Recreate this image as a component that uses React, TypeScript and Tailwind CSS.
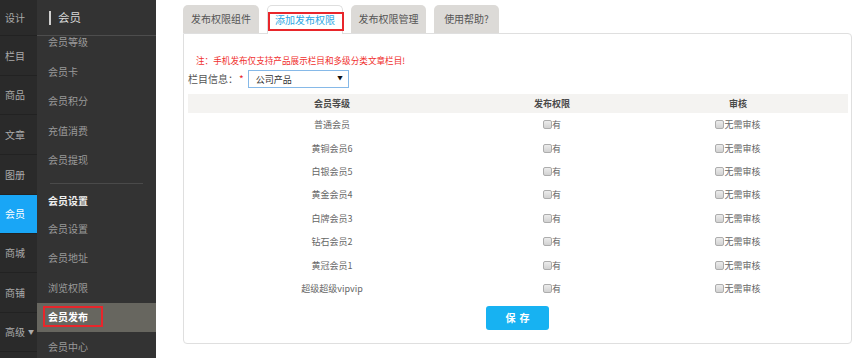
import React from "react";

const navItems: { label: string; cls: string; active?: boolean; caret?: boolean }[] = [
  { label: "设计", cls: "h-[36px]" },
  { label: "栏目", cls: "h-[40px]" },
  { label: "商品", cls: "h-[39px]" },
  { label: "文章", cls: "h-[40px]" },
  { label: "图册", cls: "h-[40px]" },
  { label: "会员", cls: "h-[39px]", active: true },
  { label: "商城", cls: "h-[39px]" },
  { label: "商铺", cls: "h-[40px]" },
  { label: "高级", cls: "h-[39px]", caret: true },
];

const levels = [
  "普通会员",
  "黄铜会员6",
  "白银会员5",
  "黄金会员4",
  "白牌会员3",
  "钻石会员2",
  "黄冠会员1",
  "超级超级vipvip",
];

function Box() {
  return (
    <span className="inline-block w-[9px] h-[9px] rounded-[2px] border border-[#adadad] bg-gradient-to-b from-[#ececec] to-[#d2d2d2]" />
  );
}

export default function App() {
  return (
    <div className="w-[860px] h-[358px] overflow-hidden flex bg-white font-['Noto_Sans_CJK_SC','Noto_Sans',sans-serif]">
      {/* column 1 */}
      <div className="w-[37px] shrink-0 bg-[#2a2a2a] flex flex-col">
        {navItems.map((n) => (
          <div
            key={n.label}
            className={`${n.cls} shrink-0 flex items-center pl-[5px] text-[10px] leading-none border-b border-[#222222] ${
              n.active ? "bg-[#19a6f6] text-white border-[#19a6f6]" : "text-[#ababab]"
            }`}
          >
            <span>{n.label}</span>
            {n.caret && <span className="ml-[3px] text-[6px] text-[#ababab]">▼</span>}
          </div>
        ))}
      </div>

      {/* column 2 */}
      <div className="w-[119px] shrink-0 bg-[#333333] flex flex-col">
        <div className="h-[36px] shrink-0 border-b border-[#4d4d4d] flex items-center">
          <span className="ml-[12px] w-[2px] h-[14px] bg-[#d0d0d0]" />
          <span className="ml-[7px] text-[11.5px] leading-none text-[#d8d8d8]">会员</span>
        </div>
        <div className="flex-1 overflow-hidden">
          <div className="mt-[-8.75px] flex flex-col">
            {["会员等级", "会员卡", "会员积分", "充值消费", "会员提现"].map((t) => (
              <div key={t} className="h-[29.5px] shrink-0 flex items-center pl-[11px] text-[10px] leading-none text-[#9a9a9a]">
                {t}
              </div>
            ))}
            <div className="mt-[8.25px] mx-[13px] h-[1px] bg-[#4a4a4a]" />
            <div className="mt-[4px] h-[26px] flex items-center pl-[11px] text-[10px] leading-none font-bold text-[#eeeeee]">
              会员设置
            </div>
            {["会员设置", "会员地址", "浏览权限"].map((t) => (
              <div key={t} className="h-[29.5px] shrink-0 flex items-center pl-[11px] text-[10px] leading-none text-[#9a9a9a]">
                {t}
              </div>
            ))}
            <div className="relative h-[29.5px] shrink-0 flex items-center pl-[11px] text-[10px] leading-none font-bold text-white bg-[#67665f]">
              会员发布
              <span className="absolute left-[6px] top-[3.5px] w-[60px] h-[21px] border-2 border-[#e8262b]" />
            </div>
            <div className="h-[29.5px] shrink-0 flex items-center pl-[11px] text-[10px] leading-none text-[#9a9a9a]">
              会员中心
            </div>
          </div>
        </div>
      </div>

      {/* main */}
      <div className="flex-1 flex flex-col pl-[27px] pr-[8px] pt-[5px]">
        <div className="flex items-end h-[28px] gap-[8px]">
          <div className="w-[76px] h-[28px] rounded-t-[5px] bg-[#dcdad7] flex items-center justify-center text-[10px] leading-none text-[#555555]">
            发布权限组件
          </div>
          <div className="relative w-[76px] h-[29px] mb-[-1px] rounded-t-[5px] bg-white border border-b-0 border-[#dedede] flex items-center justify-center text-[10px] leading-none text-[#2ba6e4] z-10">
            添加发布权限
            <span className="absolute left-[0px] top-[6px] w-[76px] h-[19px] border-2 border-[#e8262b]" />
          </div>
          <div className="w-[75px] h-[28px] rounded-t-[5px] bg-[#dcdad7] flex items-center justify-center text-[10px] leading-none text-[#555555]">
            发布权限管理
          </div>
          <div className="w-[65px] h-[28px] rounded-t-[5px] bg-[#dcdad7] flex items-center justify-center text-[10px] leading-none text-[#555555]">
            使用帮助?
          </div>
        </div>

        <div className="w-[669px] h-[311px] border border-[#dfdfdf] rounded-b-[4px] rounded-tr-[4px] px-[4px] flex flex-col">
          <div className="mt-[20px] ml-[8px] h-[12px] flex items-center text-[8.6px] leading-none text-[#f0302e]">
            注：手机发布仅支持产品展示栏目和多级分类文章栏目!
          </div>
          <div className="mt-[4px] h-[18px] flex items-center">
            <span className="text-[10px] leading-none text-[#555555]">栏目信息：</span>
            <span className="ml-[1px] text-[10px] leading-none text-[#e8262b]">*</span>
            <div className="ml-[4px] w-[101px] h-[18px] border border-[#86b9e8] bg-white flex items-center justify-between pl-[7px] pr-[5px]">
              <span className="text-[9px] leading-none text-[#333333]">公司产品</span>
              <span className="text-[5.5px] leading-none text-[#111111]">▼</span>
            </div>
          </div>
          <div className="mt-[6px] grid grid-cols-[288px_152px_220px]">
            <div className="h-[19px] bg-[#f4f3f1] flex items-center justify-center text-[9px] leading-none font-bold text-[#4a4a4a]">会员等级</div>
            <div className="h-[19px] bg-[#f4f3f1] flex items-center justify-center text-[9px] leading-none font-bold text-[#4a4a4a]">发布权限</div>
            <div className="h-[19px] bg-[#f4f3f1] flex items-center justify-center text-[9px] leading-none font-bold text-[#4a4a4a]">审核</div>
            {levels.map((l) => (
              <React.Fragment key={l}>
                <div className="h-[23.4px] flex items-center justify-center text-[9px] leading-none text-[#666666]">{l}</div>
                <div className="h-[23.4px] flex items-center justify-center text-[9px] leading-none text-[#666666]">
                  <Box />
                  <span>有</span>
                </div>
                <div className="h-[23.4px] flex items-center justify-center text-[9px] leading-none text-[#666666]">
                  <Box />
                  <span>无需审核</span>
                </div>
              </React.Fragment>
            ))}
          </div>
          <div className="mt-[6px] flex justify-center">
            <button className="w-[63px] h-[24px] rounded-[3px] bg-[#17b2f2] text-white text-[10px] leading-none font-bold tracking-[4px] pl-[4px]">
              保存
            </button>
          </div>
        </div>
      </div>
    </div>
  );
}
